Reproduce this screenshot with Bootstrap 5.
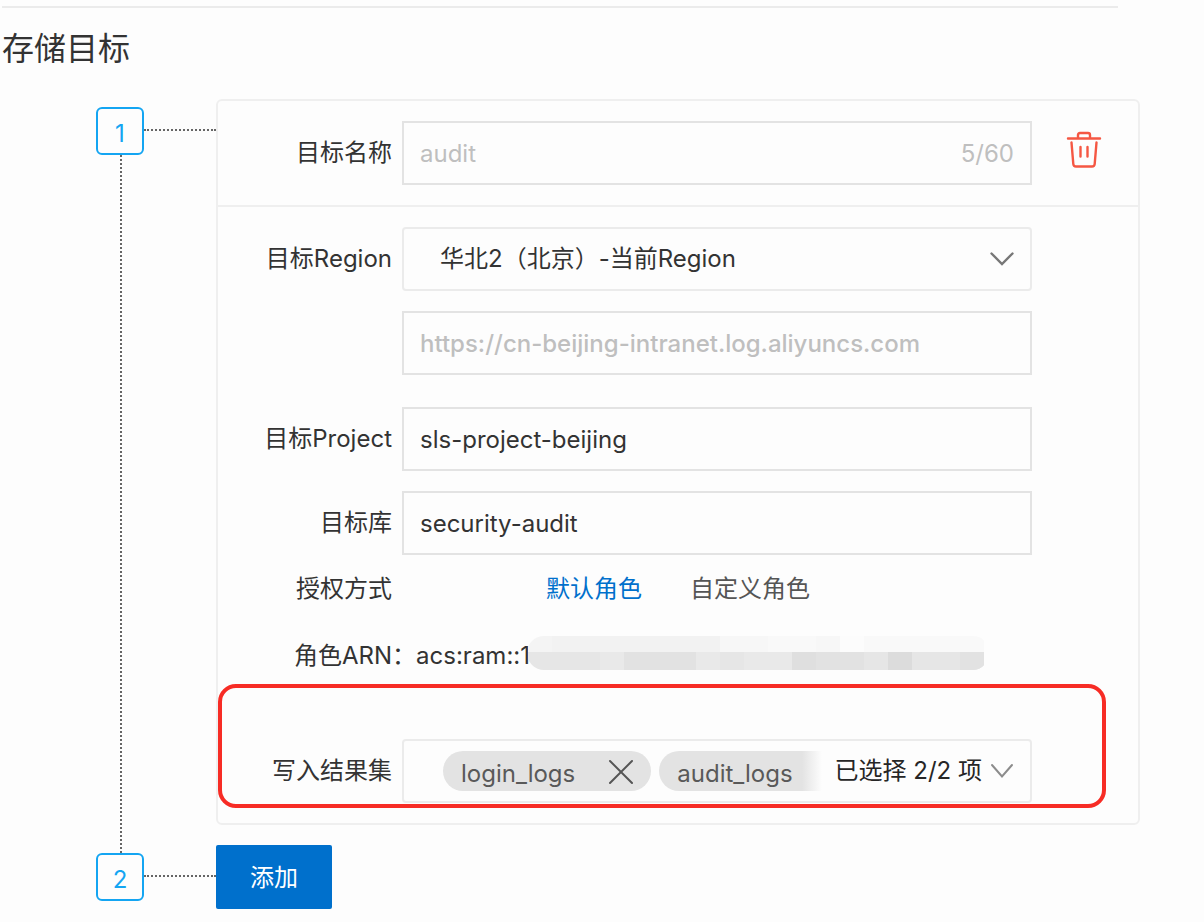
<!DOCTYPE html>
<html lang="zh-CN">
<head>
<meta charset="utf-8">
<meta name="viewport" content="width=device-width, initial-scale=1">
<title>存储目标</title>
<link href="https://cdn.jsdelivr.net/npm/bootstrap@5.3.0/dist/css/bootstrap.min.css" rel="stylesheet">
<style>
  body {
    background: #fdfdfd;
    color: #333;
    font-family: Inter, "Noto Sans CJK SC", sans-serif;
    font-size: 24px;
    line-height: 36px;
  }
  .top-rule { margin: 6px 86px 0 2px; border-top: 2px solid #ebebeb; opacity: 1; }
  .page-title { margin: 17px 0 26px 2px; font-size: 32px; line-height: 48px; font-weight: 400; }

  /* numbered steps on the left */
  .step-col { width: 216px; flex: none; padding: 8px 0 0 96px; }
  .step-num {
    width: 48px; height: 48px; border: 2px solid #14a5f2; border-radius: 6px;
    color: #14a5f2; padding-top: 6px;
  }
  .dots-h { border-top: 2px dotted #666; margin-bottom: 2px; }
  .dots-v { border-left: 2px dotted #666; margin: 0 0 -8px 24px; }

  /* target card */
  .target-card { border: 2px solid #efefef; border-radius: 6px; background: transparent; color: inherit; margin: 0 64px 20px 0; min-width: 0; }
  .target-head { padding: 20px 0; border-bottom: 2px solid #efefef; }
  .target-body { padding: 20px 0; }
  .field-row { display: grid; grid-template-columns: 184px minmax(0, 1fr) 106px; align-items: center; margin-bottom: 20px; }
  .target-head.field-row, .field-row.flush { margin-bottom: 0; }
  .field-row.spaced { margin-bottom: 32px; }
  .field-label { text-align: right; padding-right: 10px; white-space: nowrap; }
  .field-box {
    grid-column: 2; width: 100%; height: 64px; padding: 0 16px;
    border: 2px solid #e3e3e3; border-radius: 0; background-color: transparent;
    color: #333; font-size: 24px; line-height: 36px;
  }
  .field-box:disabled { color: #bfbfbf; opacity: 1; }
  .pick-box { border-color: #ebebeb; border-radius: 4px; }
  select.pick-box {
    padding-left: 36px; appearance: none;
    background: url("data:image/svg+xml,%3Csvg xmlns='http://www.w3.org/2000/svg' viewBox='0 0 24 14'%3E%3Cpath d='M1.500 1.500 12 12 22.500 1.500' fill='none' stroke='%23777' stroke-width='2.400' stroke-linecap='round'/%3E%3C/svg%3E") no-repeat right 16px center / 24px 14px;
  }
  .url-box { font-weight: 500; }
  .count { color: #bfbfbf; right: 18px; top: 15px; }
  .icon-btn { border: 0; background: none; padding: 0; color: inherit; }
  .delete-btn { color: #f55743; padding: 0 2px 6px 0; }

  .role-tabs { height: 68px; gap: 48px; padding-left: 144px; }
  .role-tab { border: 0; background: none; padding: 0; color: #555; white-space: nowrap; }
  .role-tab.active { color: #0070cc; }
  .arn-row { height: 66px; padding-left: 76px; white-space: nowrap; }
  .mosaic { margin: 0 0 6px -2px; position: relative; flex: none; }

  /* result set picker */
  .result-row { margin: 50px 0 0; }
  .result-mark { position: absolute; top: -55px; bottom: -5px; left: 0; right: 32px; border: 4px solid #f72c25; border-radius: 18px; pointer-events: none; }
  .tag-box { padding: 0 16px 0 39px; }
  .tag-list { gap: 8px; min-width: 0; overflow: hidden; }
  .tag-pill { height: 40px; border-radius: 20px; background: #e3e3e3; color: #595959; padding: 0 17px 0 18px; flex: none; }
  .tag-text { padding-top: 5px; }
  .tag-pill .icon-btn { margin: 2px 0 0 33px; }
  .tag-cut { border-radius: 20px 0 0 20px; padding-right: 29px; background: linear-gradient(to right, #e3e3e3 calc(100% - 20px), #fdfdfd); }
  .picked { color: #262626; white-space: nowrap; margin-left: auto; gap: 8px; }

  .add-btn { width: 116px; height: 64px; padding: 2px 0 0; border: 0; border-radius: 2px; background: #0070cc; color: #fff; font-size: 24px; }
</style>
</head>
<body>
<hr class="top-rule">
<main>
  <h1 class="page-title">存储目标</h1>

  <section class="d-flex">
    <div class="step-col d-flex flex-column">
      <div class="d-flex align-items-center">
        <div class="step-num d-flex align-items-center justify-content-center flex-shrink-0">1</div>
        <div class="dots-h flex-grow-1"></div>
      </div>
      <div class="dots-v flex-grow-1"></div>
    </div>

    <form class="target-card card flex-grow-1">
      <div class="target-head field-row">
        <label class="field-label" for="name">目标名称</label>
        <div class="position-relative">
          <input class="field-box d-block" id="name" type="text" value="audit" disabled>
          <span class="count position-absolute">5/60</span>
        </div>
        <button class="icon-btn delete-btn" type="button" aria-label="删除">
          <svg class="d-block mx-auto" width="36" height="38" viewBox="0 0 36 38" fill="none" stroke="currentColor" stroke-width="2.400" stroke-linecap="round" stroke-linejoin="round">
            <path d="M2 7.500h32M12 7V4q0-2 2-2h8q2 0 2 2v3M5.500 11.500l1.800 21.500q.2 2.500 2.700 2.500h16q2.500 0 2.700-2.500L30.500 11.500M14.500 16v9.500M21.500 16v9.500"/>
          </svg>
        </button>
      </div>

      <div class="target-body">
        <div class="field-row">
          <label class="field-label" for="region">目标Region</label>
          <select class="field-box pick-box" id="region"><option>华北2（北京）-当前Region</option></select>
        </div>
        <div class="field-row spaced">
          <input class="field-box url-box" type="text" aria-label="Endpoint" value="https://cn-beijing-intranet.log.aliyuncs.com" disabled>
        </div>
        <div class="field-row">
          <label class="field-label" for="project">目标Project</label>
          <input class="field-box" id="project" type="text" value="sls-project-beijing">
        </div>
        <div class="field-row flush">
          <label class="field-label" for="store">目标库</label>
          <input class="field-box" id="store" type="text" value="security-audit">
        </div>
        <div class="field-row flush">
          <span class="field-label" id="auth-label">授权方式</span>
          <div class="role-tabs d-flex align-items-center" role="group" aria-labelledby="auth-label">
            <button class="role-tab active" type="button">默认角色</button>
            <button class="role-tab" type="button">自定义角色</button>
          </div>
        </div>
        <div class="arn-row d-flex align-items-center">
          <span>角色ARN：acs:ram::1</span>
          <svg class="mosaic" width="456" height="34" viewBox="0 0 456 34" shape-rendering="crispEdges" aria-hidden="true">
            <defs><clipPath id="mosaic-shape"><path d="M16 0H444Q453 0 456 5V29Q452 34 444 34H16A17 17 0 0 1 16 0Z"/></clipPath></defs>
            <g clip-path="url(#mosaic-shape)">
              <path fill="#f4f4f4" d="M0 0h24v16H0z"/>
              <path fill="#f2f2f2" d="M24 0h168v16H24z"/>
              <path fill="#f7f7f7" d="M192 0h48v16h-48z"/>
              <path fill="#f9f9f9" d="M240 0h48v16h-48zM336 0h120v16H336z"/>
              <path fill="#f7f7f7" d="M288 0h24v16h-24z"/>
              <path fill="#fcfcfc" d="M312 0h24v16h-24z"/>
              <path fill="#e6e6e6" d="M0 16h456v18H0z"/>
              <path fill="#e9e9e9" d="M72 16h24v18H72zM168 16h24v18h-24zM216 16h48v18h-48z"/>
              <path fill="#e2e2e2" d="M96 16h72v18H96zM288 16h48v18h-48zM432 16h24v18h-24z"/>
              <path fill="#dfdfdf" d="M264 16h24v18h-24z"/>
              <path fill="#dcdcdc" d="M360 16h24v18h-24z"/>
            </g>
          </svg>
        </div>
        <div class="result-row field-row position-relative">
          <span class="field-label">写入结果集</span>
          <div class="field-box pick-box tag-box d-flex align-items-center">
            <div class="tag-list d-flex">
              <span class="tag-pill d-flex align-items-center">
                <span class="tag-text">login_logs</span>
                <button class="icon-btn" type="button" aria-label="移除 login_logs">
                  <svg class="d-block" width="26" height="26" viewBox="0 0 26 26" fill="none" stroke="#555" stroke-width="2" stroke-linecap="round"><path d="M2 2l22 22M24 2 2 24"/></svg>
                </button>
              </span>
              <span class="tag-pill tag-cut d-flex align-items-center"><span class="tag-text">audit_logs</span></span>
            </div>
            <button class="icon-btn picked d-flex align-items-center" type="button">
              <span>已选择 2/2 项</span>
              <svg width="24" height="16" viewBox="0 0 24 16" fill="none" stroke="#8c8c8c" stroke-width="2" stroke-linecap="round"><path d="M2 2l10 11.500L22 2"/></svg>
            </button>
          </div>
          <div class="result-mark"></div>
        </div>
      </div>
    </form>
  </section>

  <section class="d-flex">
    <div class="step-col">
      <div class="d-flex align-items-center">
        <div class="step-num d-flex align-items-center justify-content-center flex-shrink-0">2</div>
        <div class="dots-h flex-grow-1"></div>
      </div>
    </div>
    <button class="add-btn" type="button">添加</button>
  </section>
</main>
<script src="https://cdn.jsdelivr.net/npm/bootstrap@5.3.0/dist/js/bootstrap.bundle.min.js"></script>
</body>
</html>
